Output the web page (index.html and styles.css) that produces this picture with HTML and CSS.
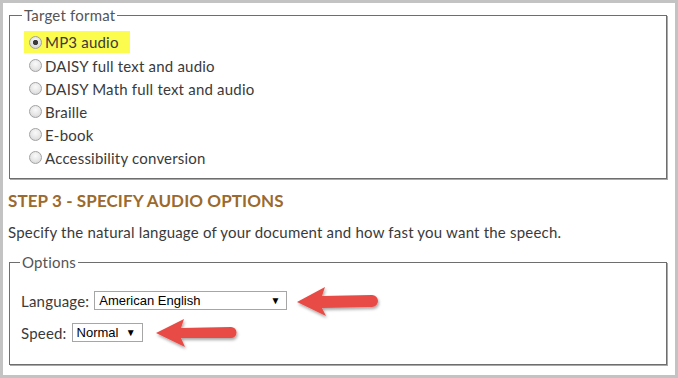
FILE: index.html
```html
<!DOCTYPE html>
<html>
<head>
<meta charset="utf-8">
<link rel="stylesheet" href="styles.css">
</head>
<body>
<div class="frame">
  <fieldset class="box box-format">
    <legend>Target format</legend>
    <label class="opt opt-hl"><input type="radio" name="fmt" checked><span>MP3 audio</span></label>
    <label class="opt"><input type="radio" name="fmt"><span>DAISY full text and audio</span></label>
    <label class="opt"><input type="radio" name="fmt"><span>DAISY Math full text and audio</span></label>
    <label class="opt"><input type="radio" name="fmt"><span>Braille</span></label>
    <label class="opt"><input type="radio" name="fmt"><span>E-book</span></label>
    <label class="opt"><input type="radio" name="fmt"><span>Accessibility conversion</span></label>
  </fieldset>

  <h2 class="step">STEP 3 - SPECIFY AUDIO OPTIONS</h2>
  <p class="intro">Specify the natural language of your document and how fast you want the speech.</p>

  <fieldset class="box box-options">
    <legend>Options</legend>
    <div class="field">
      <span class="lbl">Language:</span>
      <span class="sel sel-lang"><span class="val">American English</span><span class="caret">&#9660;</span></span>
    </div>
    <div class="field">
      <span class="lbl">Speed:</span>
      <span class="sel sel-speed"><span class="val">Normal</span><span class="caret">&#9660;</span></span>
    </div>
  </fieldset>

  <svg class="marks" width="678" height="378" viewBox="0 0 678 378">
    <defs>
      <filter id="sh" x="-20%" y="-40%" width="140%" height="180%">
        <feDropShadow dx="1" dy="2" stdDeviation="1.4" flood-color="#000" flood-opacity="0.35"/>
      </filter>
    </defs>
    <path filter="url(#sh)" fill="#e84b45" d="M297 302 L325 287 L322 296 L372 295 A6 6 0 0 1 372 307 L322 308 L326 316 Z"/>
    <path filter="url(#sh)" fill="#e84b45" d="M156 333 L184 319 L181 328 L231 327 A5.5 5.5 0 0 1 231 338 L181 338 L185 347 Z"/>
  </svg>
</div>
</body>
</html>
```
FILE: styles.css
```css
html, body {
  margin: 0;
  padding: 0;
  background: #fff;
}

.frame {
  position: relative;
  box-sizing: border-box;
  width: 678px;
  height: 378px;
  border: 3px solid #c3c3c3;
  background: #fff;
  padding: 0 8px 0 6px;
  font-family: Lato, "Open Sans", sans-serif;
  font-size: 15px;
  letter-spacing: 0.2px;
  color: #3a3a3a;
  overflow: hidden;
}

.box {
  margin: 3px 0 0 0;
  border: 1px solid #6e6e6e;
  box-shadow: 1px 1px 0 #a9a9a9;
  min-width: 0;
}

.box legend {
  padding: 0 2px;
  line-height: 18px;
  color: #555;
  font-size: 15px;
}

.box-format {
  padding: 7px 12px 9px 12px;
}

.opt {
  display: flex;
  align-items: center;
  height: 23px;
  margin-left: 2px;
  line-height: 18px;
}

.opt-hl {
  align-self: flex-start;
  width: 106px;
  height: 22px;
  margin-bottom: 1px;
  background: #fcfc4e;
}

.opt input {
  appearance: none;
  -webkit-appearance: none;
  width: 13px;
  height: 13px;
  margin: 0 3px 0 5px;
  border-radius: 50%;
  border: 1px solid #a2a2a2;
  background: radial-gradient(circle at 50% 35%, #fafafa 0%, #e6e6e6 55%, #cfcfcf 100%);
  box-sizing: border-box;
  flex: none;
}

.opt input:checked {
  background:
    radial-gradient(circle, #3b3b3b 0, #3b3b3b 2.2px, rgba(0,0,0,0) 3px),
    radial-gradient(circle at 50% 35%, #fafafa 0%, #e2e2e2 55%, #cbcbcb 100%);
}

.step {
  margin: 12px 0 0 -1px;
  font-size: 17px;
  line-height: 20px;
  font-weight: 700;
  letter-spacing: 0.1px;
  color: #9b6a2c;
}

.intro {
  margin: 12px 0 0 -1px;
  line-height: 18px;
}

.box-options {
  margin-top: 12px;
  padding: 20px 10px 22px 10px;
}

.field {
  display: flex;
  align-items: center;
  height: 19px;
  margin-left: 1px;
  gap: 5px;
}

.field + .field {
  margin-top: 13px;
}

.lbl {
  line-height: 18px;
}

.sel {
  display: flex;
  align-items: center;
  justify-content: space-between;
  height: 19px;
  box-sizing: border-box;
  border: 1px solid #a6a6a6;
  background: #fff;
  padding: 0 6px 0 4px;
  font-family: "Liberation Sans", Arial, sans-serif;
  font-size: 13px;
  letter-spacing: 0;
  color: #000;
}

.sel-lang {
  width: 193px;
}

.sel-speed {
  width: 71px;
}

.caret {
  font-size: 10px;
  line-height: 1;
}

.marks {
  position: absolute;
  left: -3px;
  top: -3px;
  pointer-events: none;
}
```
